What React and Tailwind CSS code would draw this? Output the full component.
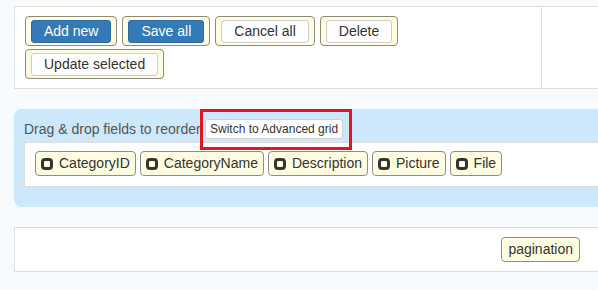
const topButtons = [
  { label: "Add new", primary: true },
  { label: "Save all", primary: true },
  { label: "Cancel all" },
  { label: "Delete" },
];

const fields = ["CategoryID", "CategoryName", "Description", "Picture", "File"];

const ToolButton = ({ label, primary }) => (
  <div className="rounded-[4px] border border-[#8c8a78] bg-[#fffde1] px-[5px] py-[2px]">
    <button
      type="button"
      className={`h-[23px] rounded-[3px] border px-3 text-[14px] leading-none ${
        primary
          ? "border-[#2e6da4] bg-[#337ab7] text-white"
          : "border-[#cccccc] bg-white text-[#333]"
      }`}
    >
      {label}
    </button>
  </div>
);

const CheckIcon = () => (
  <svg width="12" height="12" viewBox="0 0 12 12" className="shrink-0">
    <rect x="1.5" y="1.5" width="9" height="9" rx="2.5" fill="none" stroke="#333" strokeWidth="3" />
  </svg>
);

const FieldChip = ({ name }) => (
  <div className="flex h-[25px] items-center gap-[6px] rounded-[4px] border border-[#8c8c8c] bg-[#fffde1] px-[5px] text-[14px] text-[#333]">
    <CheckIcon />
    <span>{name}</span>
  </div>
);

export default function App() {
  return (
    <div
      className="h-[290px] w-[598px] overflow-hidden bg-[#f7fbfe] pl-[14px] pt-[6px]"
      style={{ fontFamily: '"Liberation Sans", Arial, sans-serif' }}
    >
      {/* toolbar panel */}
      <div className="flex w-[600px] border border-[#dddddd] bg-white">
        <div className="flex w-[527px] flex-col gap-[3px] border-r border-[#dddddd] px-[10px] pb-[9px] pt-[9px]">
          <div className="flex gap-[5px]">
            {topButtons.map((b) => (
              <ToolButton key={b.label} {...b} />
            ))}
          </div>
          <div className="flex">
            <ToolButton label="Update selected" />
          </div>
        </div>
        <div className="flex-1" />
      </div>

      {/* grouping panel */}
      <div className="relative mt-[20px] h-[98px] w-[600px] rounded-l-[8px] bg-[#cde8fa] pl-[10px] pt-[10px]">
        <div className="flex h-[20px] items-center">
          <span className="w-[181px] whitespace-nowrap text-[14px] text-[#555]">Drag &amp; drop fields to reorder</span>
          <button
            type="button"
            className="h-[20px] rounded-[3px] border border-[#d0d0d0] bg-white px-[4px] text-[12px] leading-none text-[#333]"
          >
            Switch to Advanced grid
          </button>
        </div>
        <div className="mt-[3px] flex h-[45px] gap-[4px] border border-[#dddddd] bg-white pl-[10px] pt-[8px]">
          {fields.map((f) => (
            <FieldChip key={f} name={f} />
          ))}
        </div>
        <div className="absolute left-[186px] top-0 h-[41px] w-[152px] border-[3px] border-[#e3151f]" />
      </div>

      {/* pager panel */}
      <div className="mt-[20px] flex h-[45px] w-[600px] items-start justify-end border border-[#dddddd] bg-white pr-[33px] pt-[9px]">
        <div className="flex h-[25px] items-center rounded-[4px] border border-[#8c8c8c] bg-[#fffde1] px-[6px] text-[14px] text-[#333]">
          pagination
        </div>
      </div>
    </div>
  );
}
